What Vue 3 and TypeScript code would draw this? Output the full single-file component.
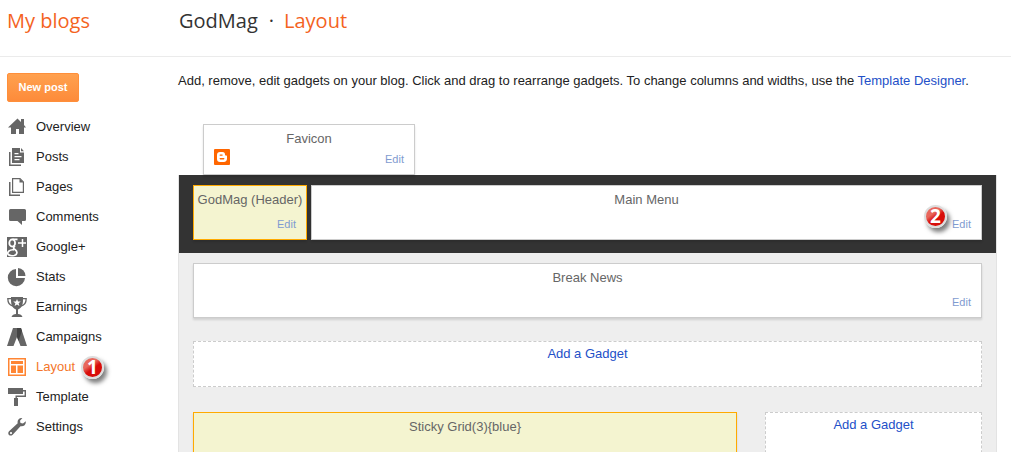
<script setup lang="ts">
interface NavItem {
  label: string
  icon: string
  step?: number
}

const navItems: NavItem[] = [
  { label: 'Overview', icon: 'home' },
  { label: 'Posts', icon: 'posts' },
  { label: 'Pages', icon: 'pages' },
  { label: 'Comments', icon: 'comments' },
  { label: 'Google+', icon: 'google' },
  { label: 'Stats', icon: 'stats' },
  { label: 'Earnings', icon: 'earnings' },
  { label: 'Campaigns', icon: 'campaigns' },
  { label: 'Layout', icon: 'layout', step: 1 },
  { label: 'Template', icon: 'template' },
  { label: 'Settings', icon: 'settings' },
]
</script>

<template>
  <div class="page">
    <header class="top">
      <a class="my-blogs" href="#">My blogs</a>
      <h1 class="crumbs">
        <span>GodMag</span><span class="dot">·</span><span class="current">Layout</span>
      </h1>
    </header>

    <div class="body">
      <aside class="side">
        <button class="new-post" type="button">New post</button>
        <nav>
          <a
            v-for="item in navItems"
            :key="item.label"
            href="#"
            class="nav-item"
            :class="{ active: item.icon === 'layout' }"
          >
            <svg class="icon" width="20" height="20" viewBox="0 0 20 20" fill="currentColor" aria-hidden="true">
              <template v-if="item.icon === 'home'">
                <path d="M10.500 1.500 1 10.500h3V17h5v-5h3v5h5v-6.500h2L17 8V2h-3v3z" />
              </template>
              <template v-else-if="item.icon === 'posts'">
                <path d="M2 5h1.500v12.500H14V19H2z" />
                <path fill-rule="evenodd" d="M5 1h8v4.500h4V16H5zM7.500 6v1.300h4V6zm0 3v1.300h7V9zm0 3v1.300h5V12z" />
                <path d="M14 1l3 3.300h-3z" />
              </template>
              <template v-else-if="item.icon === 'pages'">
                <path d="M2 5h1.500v12.500H13V19H2z" />
                <path d="M5.600 1.600h7.400l3.400 3.400v10.400H5.600z" fill="none" stroke="currentColor" stroke-width="1.200" />
                <path d="M12.500 1.500v4h4z" />
              </template>
              <template v-else-if="item.icon === 'comments'">
                <path d="M3.500 2h14q1.500 0 1.500 1.500v9q0 1.500-1.500 1.500H15v4l-4.500-4h-7Q2 14 2 12.500v-9Q2 2 3.500 2z" />
              </template>
              <template v-else-if="item.icon === 'google'">
                <path d="M0 0h20v20H0z" />
                <g fill="none" stroke="#fff">
                  <ellipse cx="5.200" cy="6" rx="2.900" ry="3.600" stroke-width="1.800" />
                  <path d="M5.500 2.300h5M8 9c-2 2-2 2 0 3.500 2.800 2 2.500 5.200-.8 6C2 19.500-1 17 1.800 14.200 3 13 5 12.600 7 12.800" stroke-width="1.700" />
                  <path d="M11 6h8M15.500 2v8" stroke-width="1.500" />
                </g>
              </template>
              <template v-else-if="item.icon === 'stats'">
                <path d="M9 2v9h9A8.600 8.600 0 1 1 9 2z" />
                <path d="M11 1a7.800 7.800 0 0 1 7.500 8H11z" />
              </template>
              <template v-else-if="item.icon === 'earnings'">
                <path d="M4 0h12v3c0 5.500-2 8.500-5 9.500V17c2 .2 4 .8 4.500 3h-11c.5-2.200 2.500-2.800 4.500-3v-4.500C6 11.500 4 8.500 4 3z" />
                <path d="M4 1.600H.8c0 4 1.500 6.700 5 7.400M16 1.600h3.200c0 4-1.500 6.700-5 7.400" fill="none" stroke="currentColor" stroke-width="1.300" />
                <path d="m10 2 1 2.500 2.800.1-2.200 1.700.8 2.700L10 7.500 7.600 9l.8-2.700-2.200-1.700L9 4.500z" fill="#fff" />
              </template>
              <template v-else-if="item.icon === 'campaigns'">
                <path d="M6 1h8l6 18h-6.500L10 10l-3.500 9H0z" />
                <path d="M10 1h4l1 3-3.500 10L10 10z" fill="#444" />
              </template>
              <template v-else-if="item.icon === 'layout'">
                <path fill-rule="evenodd" d="M1 1h18v18H1zm1.500 1.500v15h15v-15z" />
                <path d="M4 4h12v3H4zM4 8.500h5V16H4zM10.500 8.500H16V16h-5.500z" />
              </template>
              <template v-else-if="item.icon === 'template'">
                <path d="M1 1h15v6H1z" />
                <path d="M15 3.700h3.300v5.600H9.200V13" fill="none" stroke="currentColor" stroke-width="1.400" />
                <path d="M7 11h4v8H7z" />
              </template>
              <template v-else>
                <path fill-rule="evenodd" d="M18.800 4.200 16 6.500l-2.500-.5-.5-2.300L15.400 1c-3.300-.5-5.500 2.200-4.700 5.200L2.300 14c-2.800 2.600.6 6.300 3.400 3.700l7.800-8.500c3 .8 5.800-1.600 5.300-5zM4 15a1.100 1.100 0 1 1 0 2.200A1.100 1.100 0 0 1 4 15z" />
              </template>
            </svg>
            <span>{{ item.label }}</span>
            <span v-if="item.step" class="step">{{ item.step }}</span>
          </a>
        </nav>
      </aside>

      <main class="main">
        <p class="intro">
          Add, remove, edit gadgets on your blog. Click and drag to rearrange gadgets. To change columns and
          widths, use the <a href="#">Template Designer</a>.
        </p>

        <section class="widget favicon">
          <h2>Favicon</h2>
          <svg class="blogger" width="16" height="16" viewBox="0 0 16 16" role="img" aria-label="Blogger">
            <rect width="16" height="16" rx="1" fill="#f60" />
            <path
              fill="#fff"
              fill-rule="evenodd"
              d="M6 3h2.500C10.300 3 11 4.200 11 5.600c0 .8.300 1 1 1 .8 0 1 .3 1 1v2.200c0 2-1.200 3.200-3.200 3.200H6c-2 0-3-1.200-3-3V6c0-1.900 1.100-3 3-3zm.2 2.500c-.9 0-.9 1.200 0 1.200h1.900c.9 0 .9-1.200 0-1.200zm0 3.600c-.9 0-.9 1.300 0 1.300h3.600c.9 0 .9-1.300 0-1.300z"
            />
          </svg>
          <a class="edit" href="#">Edit</a>
        </section>

        <div class="canvas">
          <div class="band">
            <section class="widget locked site-header">
              <h2>GodMag (Header)</h2>
              <a class="edit" href="#">Edit</a>
            </section>
            <section class="widget menu">
              <h2>Main Menu</h2>
              <a class="edit" href="#">Edit</a>
              <span class="step over">2</span>
            </section>
          </div>
          <div class="rows">
            <section class="widget">
              <h2>Break News</h2>
              <a class="edit" href="#">Edit</a>
            </section>
            <a class="add" href="#">Add a Gadget</a>
            <div class="columns">
              <section class="widget locked">
                <h2>Sticky Grid(3){blue}</h2>
              </section>
              <a class="add" href="#">Add a Gadget</a>
            </div>
          </div>
        </div>
      </main>
    </div>
  </div>
</template>

<style>
html {
  scrollbar-width: none;
}
body {
  margin: 0;
  background: #fff;
}
</style>

<style scoped>
.page {
  font: 13px/20px "Liberation Sans", Arial, sans-serif;
  color: #222;
}
a {
  color: #2350c8;
  text-decoration: none;
}
h1,
h2,
p {
  margin: 0;
  font-weight: normal;
}
.top {
  display: flex;
  height: 56px;
  border-bottom: 1px solid #ebebeb;
  font: 20px/42px "Open Sans", sans-serif;
}
.my-blogs {
  box-sizing: border-box;
  width: 179px;
  padding-left: 7px;
  color: #f4631e;
}
.crumbs {
  font: inherit;
  color: #333;
}
.dot {
  margin: 0 10px 0 11px;
}
.current {
  color: #f4631e;
}
.body {
  display: flex;
}
.side {
  flex: none;
  width: 171px;
  padding: 16px 0 0 7px;
}
.new-post {
  display: block;
  min-width: 72px;
  height: 29px;
  padding: 0 10px;
  border: 1px solid #ff8f3a;
  border-radius: 2px;
  background: linear-gradient(#ffa14f, #fd8b3a);
  color: #fff;
  font: bold 11px/27px "Liberation Sans", Arial, sans-serif;
}
nav {
  padding-top: 10px;
}
.nav-item {
  display: flex;
  align-items: center;
  height: 30px;
  color: #222;
}
.nav-item.active {
  color: #f4762a;
}
.icon {
  flex: none;
  margin-right: 9px;
  color: #666;
}
.active .icon {
  color: #ff8533;
}
.step {
  box-sizing: border-box;
  width: 23px;
  height: 23px;
  margin-left: 6px;
  border: 2px solid #ddd;
  border-radius: 50%;
  background: linear-gradient(145deg, #e8675c 0 35%, #d80d0a 55% 100%);
  box-shadow: 3px 4px 4px rgba(0, 0, 0, 0.5);
  color: #fff;
  font: bold 19px/19px "Open Sans", sans-serif;
  text-align: center;
}
.step.over {
  position: absolute;
  right: 34px;
  top: 19px;
}
.main {
  flex: 1;
  min-width: 0;
  padding: 14px 14px 0 0;
}
.intro {
  padding-bottom: 33px;
}
.widget {
  position: relative;
  box-sizing: border-box;
  height: 55px;
  padding: 4px 10px;
  border: 1px solid #ccc;
  background: #fff;
  box-shadow: 0 2px 2px rgba(0, 0, 0, 0.12);
}
.widget h2 {
  font-size: 13px;
  line-height: 20px;
  color: #666;
  text-align: center;
  white-space: nowrap;
}
.edit {
  position: absolute;
  right: 10px;
  bottom: 5px;
  font-size: 11px;
  line-height: 20px;
  color: #7f9bd0;
}
.locked {
  border-color: #fa0;
  background: #f4f4d0;
}
.favicon {
  width: 212px;
  height: 51px;
  margin-left: 25px;
}
.blogger {
  display: block;
}
.canvas {
  border: 1px solid #e3e3e3;
  border-top: 0;
  background: #eee;
}
.band {
  display: flex;
  gap: 4px;
  padding: 10px 14px 13px;
  background: #333;
}
.site-header {
  width: 114px;
  padding: 4px 0;
}
.menu {
  flex: 1;
}
.rows {
  padding: 10px 14px;
}
.add {
  display: block;
  box-sizing: border-box;
  height: 46px;
  padding-top: 2px;
  border: 1px dashed #ccc;
  background: #fff;
  text-align: center;
}
.rows > .add {
  margin: 23px 0 25px;
}
.columns {
  display: grid;
  grid-template-columns: 544fr 217fr;
  gap: 28px;
}
</style>
